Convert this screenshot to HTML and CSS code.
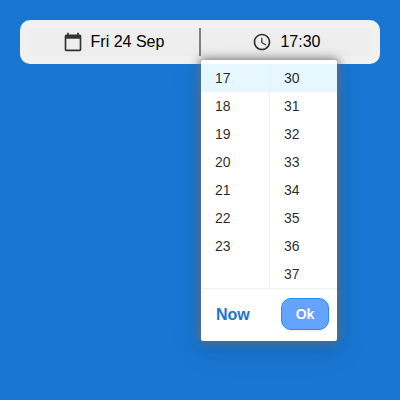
FILE: index.html
```
<!DOCTYPE html>
<html lang="en">
<head>
<meta charset="utf-8">
<title>Date and time</title>
<link rel="stylesheet" href="styles.css">
</head>
<body>
<div class="bar">
  <div class="field date">
    <svg class="icon" viewBox="0 0 24 24"><path d="M20 3h-1V1h-2v2H7V1H5v2H4c-1.100 0-2 .9-2 2v16c0 1.100.9 2 2 2h16c1.100 0 2-.9 2-2V5c0-1.100-.9-2-2-2zm0 18H4V8h16v13z"/></svg>
    <span>Fri 24 Sep</span>
  </div>
  <div class="field time">
    <svg class="icon" viewBox="0 0 24 24"><path d="M11.990 2C6.470 2 2 6.480 2 12s4.470 10 9.990 10C17.520 22 22 17.520 22 12S17.520 2 11.990 2zM12 20c-4.420 0-8-3.580-8-8s3.580-8 8-8 8 3.580 8 8-3.580 8-8 8zm.5-13H11v6l5.250 3.150.75-1.230-4.500-2.670z"/></svg>
    <span>17:30</span>
  </div>
</div>
<div class="picker">
  <div class="columns">
    <ul class="column">
      <li class="selected">17</li><li>18</li><li>19</li><li>20</li><li>21</li><li>22</li><li>23</li>
    </ul>
    <ul class="column">
      <li class="selected">30</li><li>31</li><li>32</li><li>33</li><li>34</li><li>35</li><li>36</li><li>37</li>
    </ul>
  </div>
  <div class="footer">
    <a class="now">Now</a>
    <button class="ok">Ok</button>
  </div>
</div>
</body>
</html>
```
FILE: styles.css
```
* { box-sizing: border-box; }
body {
  margin: 0;
  padding: 20px;
  height: 400px;
  overflow: hidden;
  background: #1976d2;
  font-family: "Liberation Sans", Arial, sans-serif;
}
.bar {
  display: flex;
  height: 44px;
  padding: 8px;
  border-radius: 10px;
  background: #f1f1f1;
}
.field {
  flex: 1;
  display: flex;
  align-items: center;
  justify-content: center;
  gap: 8px;
  background: #eee;
  font-size: 16px;
  line-height: 28px;
  color: #000;
}
.date { flex: 0 0 173px; border-right: 2px solid #808080; }
.icon { width: 20px; height: 20px; fill: #333; }
.picker {
  position: absolute;
  left: 201px;
  top: 60px;
  width: 136px;
  height: 281px;
  padding-top: 4px;
  border-radius: 2px;
  background: #fff;
  box-shadow:
    0 0 10px 1px #707070,
    0 3px 6px -4px rgba(0, 0, 0, .12),
    0 6px 16px rgba(0, 0, 0, .08),
    0 9px 28px 8px rgba(0, 0, 0, .05);
}
.columns {
  display: grid;
  grid-template-columns: 68px 68px;
  height: 224px;
}
.column {
  margin: 0;
  padding: 0;
  list-style: none;
  font-size: 14px;
  line-height: 28px;
  color: rgba(0, 0, 0, .85);
}
.column + .column { border-left: 1px solid #f0f0f0; }
.column li { height: 28px; padding-left: 14px; }
.selected { background: #e6f7ff; }
.footer {
  display: flex;
  align-items: center;
  justify-content: space-between;
  height: 53px;
  padding: 0 8px 0 15px;
  border-top: 1px solid #f0f0f0;
}
.now { font-size: 16px; font-weight: bold; color: #1976d2; }
.ok {
  width: 48px;
  height: 32px;
  margin-bottom: 2px;
  padding: 0;
  border: 1px solid #1890ff;
  border-radius: 10px;
  background: #66a3ff;
  color: #fff;
  font: bold 14px "Liberation Sans", Arial, sans-serif;
  text-shadow: 0 -1px 0 rgba(0, 0, 0, .12);
  box-shadow: 0 2px 0 rgba(0, 0, 0, .045);
}
```
